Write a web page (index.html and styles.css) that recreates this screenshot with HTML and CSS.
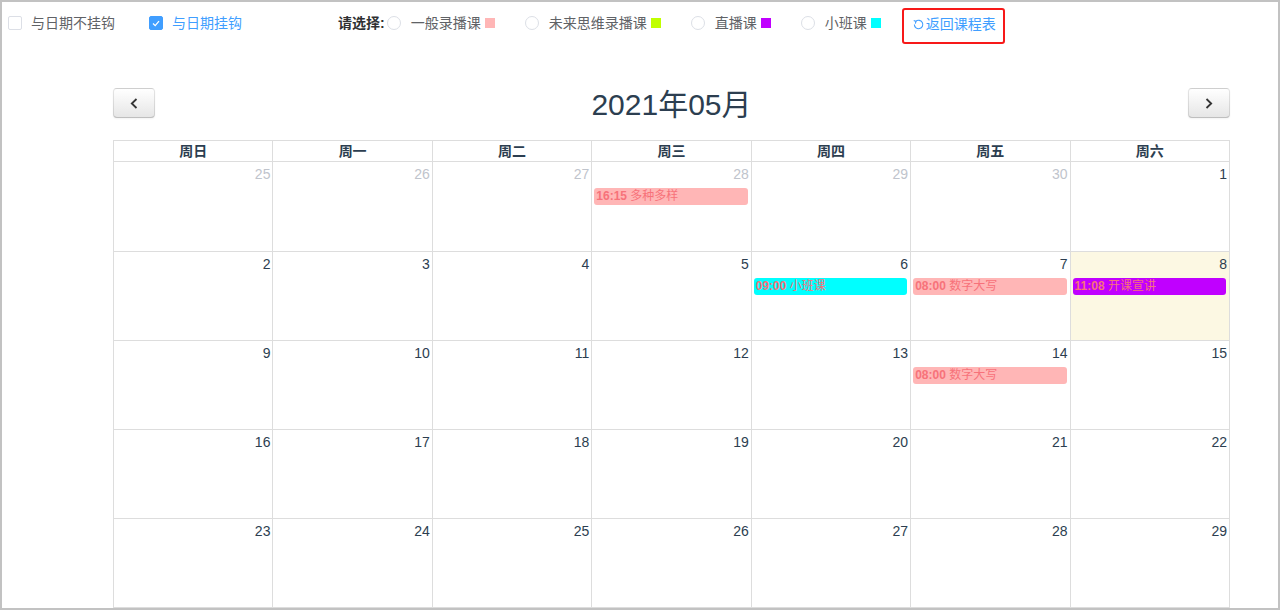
FILE: index.html
```html
<!DOCTYPE html>
<html lang="zh-CN">
<head>
    <meta charset="UTF-8">
    <title>课程日历</title>
    <link rel="stylesheet" href="styles.css">
</head>
<body>
    <div class="page">
        <div class="toolbar">
            <label class="check">
                <span class="check-box"></span>与日期不挂钩
            </label>
            <label class="check is-checked">
                <span class="check-box">
                    <svg width="8" height="7" viewBox="0 0 8 7"><polyline points="1,3.5 3.2,5.6 7,1.2" fill="none" stroke="#fff" stroke-width="1.3"/></svg>
                </span>与日期挂钩
            </label>
            <span class="pick-label">请选择:</span>
            <label class="radio"><span class="radio-circle"></span>一般录播课<i class="swatch swatch-pink"></i></label>
            <label class="radio"><span class="radio-circle"></span>未来思维录播课<i class="swatch swatch-lime"></i></label>
            <label class="radio"><span class="radio-circle"></span>直播课<i class="swatch swatch-purple"></i></label>
            <label class="radio radio-last"><span class="radio-circle"></span>小班课<i class="swatch swatch-cyan"></i></label>
            <a class="back-btn" href="#">
                <svg width="11" height="11" viewBox="0 0 12 12"><path d="M3 2.6 A4.6 4.6 0 1 1 1.5 6" fill="none" stroke="#409eff" stroke-width="1.2"/><polyline points="0.8,1.6 3.2,2.6 2.6,5" fill="none" stroke="#409eff" stroke-width="1.2"/></svg>返回课程表
            </a>
        </div>

        <div class="calendar">
            <div class="cal-header">
                <button class="nav-btn" type="button">
                    <svg width="8" height="11" viewBox="0 0 8 11"><polyline points="6.5,1 1.8,5.5 6.5,10" fill="none" stroke="#333" stroke-width="1.8"/></svg>
                </button>
                <h2 class="cal-title">2021年05月</h2>
                <button class="nav-btn" type="button">
                    <svg width="8" height="11" viewBox="0 0 8 11"><polyline points="1.5,1 6.2,5.5 1.5,10" fill="none" stroke="#333" stroke-width="1.8"/></svg>
                </button>
            </div>

            <div class="cal-grid">
                <div class="head-cell">周日</div>
                <div class="head-cell">周一</div>
                <div class="head-cell">周二</div>
                <div class="head-cell">周三</div>
                <div class="head-cell">周四</div>
                <div class="head-cell">周五</div>
                <div class="head-cell">周六</div>

                <div class="day other"><span class="num">25</span></div>
                <div class="day other"><span class="num">26</span></div>
                <div class="day other"><span class="num">27</span></div>
                <div class="day other"><span class="num">28</span>
                    <div class="event ev-pink"><b>16:15</b> 多种多样</div>
                </div>
                <div class="day other"><span class="num">29</span></div>
                <div class="day other"><span class="num">30</span></div>
                <div class="day"><span class="num">1</span></div>

                <div class="day"><span class="num">2</span></div>
                <div class="day"><span class="num">3</span></div>
                <div class="day"><span class="num">4</span></div>
                <div class="day"><span class="num">5</span></div>
                <div class="day"><span class="num">6</span>
                    <div class="event ev-cyan"><b>09:00</b> 小班课</div>
                </div>
                <div class="day"><span class="num">7</span>
                    <div class="event ev-pink"><b>08:00</b> 数字大写</div>
                </div>
                <div class="day today"><span class="num">8</span>
                    <div class="event ev-purple"><b>11:08</b> 开课宣讲</div>
                </div>

                <div class="day"><span class="num">9</span></div>
                <div class="day"><span class="num">10</span></div>
                <div class="day"><span class="num">11</span></div>
                <div class="day"><span class="num">12</span></div>
                <div class="day"><span class="num">13</span></div>
                <div class="day"><span class="num">14</span>
                    <div class="event ev-pink"><b>08:00</b> 数字大写</div>
                </div>
                <div class="day"><span class="num">15</span></div>

                <div class="day"><span class="num">16</span></div>
                <div class="day"><span class="num">17</span></div>
                <div class="day"><span class="num">18</span></div>
                <div class="day"><span class="num">19</span></div>
                <div class="day"><span class="num">20</span></div>
                <div class="day"><span class="num">21</span></div>
                <div class="day"><span class="num">22</span></div>

                <div class="day"><span class="num">23</span></div>
                <div class="day"><span class="num">24</span></div>
                <div class="day"><span class="num">25</span></div>
                <div class="day"><span class="num">26</span></div>
                <div class="day"><span class="num">27</span></div>
                <div class="day"><span class="num">28</span></div>
                <div class="day"><span class="num">29</span></div>
            </div>
        </div>
    </div>
</body>
</html>
```

FILE: styles.css
```css
body {
    margin: 0;
    background-color: #fff;
    font-family: "Liberation Sans", "Noto Sans CJK SC", sans-serif;
    font-size: 14px;
    color: #606266;
}

.page {
    box-sizing: border-box;
    height: 610px;
    border: 2px solid #c2c2c2;
    overflow: hidden;
}

/* top filter bar */
.toolbar {
    display: flex;
    align-items: flex-start;
    height: 44px;
    padding-left: 6px;
    padding-top: 6px;
    box-sizing: border-box;
}

.check,
.radio,
.pick-label {
    display: flex;
    align-items: center;
    height: 20px;
    line-height: 20px;
    margin-top: 5px;
}

.check {
    gap: 9px;
    margin-right: 34px;
}

.check.is-checked {
    color: #409eff;
    margin-right: 96px;
}

.check-box {
    box-sizing: border-box;
    width: 14px;
    height: 14px;
    border: 1px solid #dcdfe6;
    border-radius: 2px;
    background-color: #fff;
    display: flex;
    align-items: center;
    justify-content: center;
}

.is-checked .check-box {
    background-color: #409eff;
    border-color: #409eff;
}

.pick-label {
    font-weight: bold;
    color: #303133;
    margin-right: 2px;
}

.radio {
    margin-right: 30px;
}

.radio-last {
    margin-right: 21px;
}

.radio-circle {
    box-sizing: border-box;
    width: 14px;
    height: 14px;
    border: 1px solid #dcdfe6;
    border-radius: 50%;
    margin-right: 10px;
}

.swatch {
    display: inline-block;
    width: 10px;
    height: 10px;
    margin-left: 4px;
}

.swatch-pink { background-color: #ffb6b6; }
.swatch-lime { background-color: #c0ff00; }
.swatch-purple { background-color: #c000ff; }
.swatch-cyan { background-color: #00ffff; }

.back-btn {
    display: flex;
    align-items: center;
    gap: 2px;
    box-sizing: border-box;
    height: 36px;
    padding: 4px 7px 8px 9px;
    border: 2px solid #f71919;
    border-radius: 3px;
    line-height: 20px;
    color: #409eff;
    text-decoration: none;
}

/* calendar */
.calendar {
    width: 1117px;
    margin-left: 111px;
    padding-top: 42px;
}

.cal-header {
    display: flex;
    justify-content: space-between;
    align-items: center;
    height: 30px;
    margin-bottom: 22px;
}

.nav-btn {
    box-sizing: border-box;
    width: 42px;
    height: 30px;
    padding: 0;
    border: 1px solid;
    border-color: rgba(0, 0, 0, 0.1) rgba(0, 0, 0, 0.1) rgba(0, 0, 0, 0.25);
    border-radius: 4px;
    background-color: #f5f5f5;
    background-image: linear-gradient(to bottom, #fff, #e6e6e6);
    box-shadow: inset 0 1px 0 rgba(255, 255, 255, 0.2), 0 1px 2px rgba(0, 0, 0, 0.05);
    display: flex;
    align-items: center;
    justify-content: center;
}

.cal-title {
    margin: 0;
    font-size: 30px;
    font-weight: normal;
    line-height: 30px;
    color: #2c3e50;
    position: relative;
    top: 2px;
}

.cal-grid {
    display: grid;
    grid-template-columns: repeat(7, 1fr);
    grid-template-rows: 21px 90px repeat(4, 89px);
    border-top: 1px solid #ddd;
    border-left: 1px solid #ddd;
}

.head-cell,
.day {
    box-sizing: border-box;
    border-right: 1px solid #ddd;
    border-bottom: 1px solid #ddd;
}

.head-cell {
    text-align: center;
    font-weight: bold;
    line-height: 20px;
    color: #2c3e50;
}

.day {
    padding: 2px 0 0;
    color: #2c3e50;
}

.day.other {
    color: #c0c4cc;
}

.day.today {
    background-color: #fcf8e3;
}

.num {
    display: block;
    text-align: right;
    line-height: 20px;
    padding-right: 2px;
}

.event {
    margin: 4px 3px 0 2px;
    height: 17px;
    line-height: 17px;
    padding-left: 2px;
    border-radius: 3px;
    font-size: 12px;
    color: #f7727a;
    white-space: nowrap;
    overflow: hidden;
}

.ev-pink { background-color: #ffb6b6; }
.ev-cyan { background-color: #00ffff; }
.ev-purple { background-color: #c000ff; }
```
